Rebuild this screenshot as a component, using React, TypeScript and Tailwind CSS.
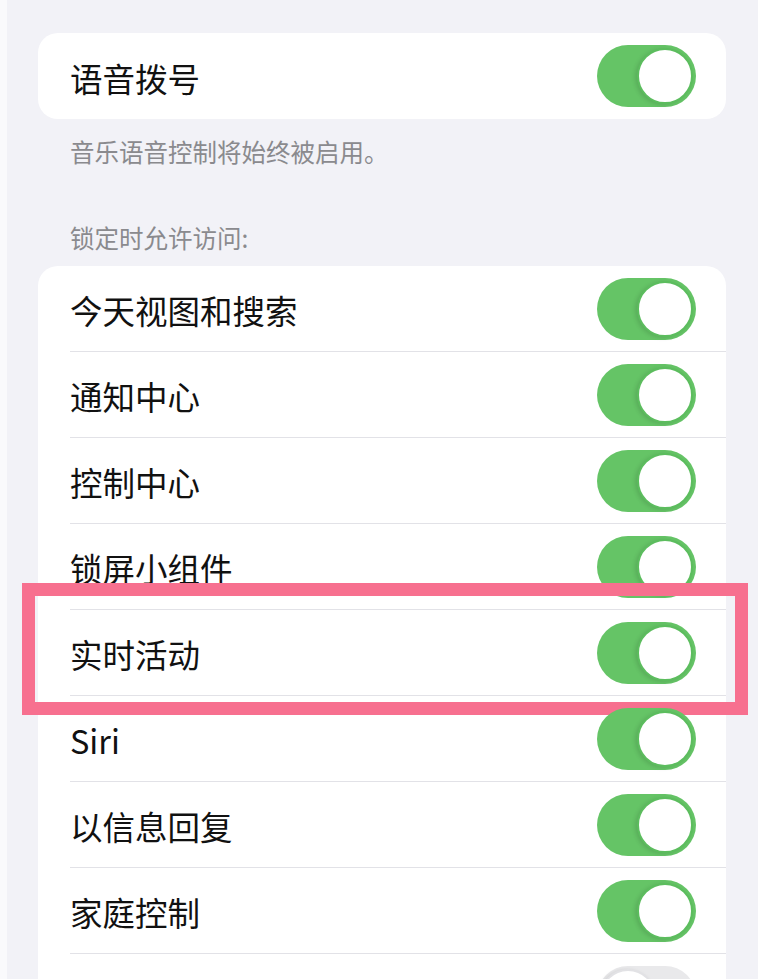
import React from 'react'

type Row = { label: string; on: boolean }

// the last row sits below the fold, only its switch peeks in
const lockRows: Row[] = [
  { label: '今天视图和搜索', on: true },
  { label: '通知中心', on: true },
  { label: '控制中心', on: true },
  { label: '锁屏小组件', on: true },
  { label: '实时活动', on: true },
  { label: 'Siri', on: true },
  { label: '以信息回复', on: true },
  { label: '家庭控制', on: true },
  { label: '', on: false },
]

function Toggle({ on }: { on: boolean }) {
  return (
    <div
      className={`flex h-[62px] w-[99px] shrink-0 items-center rounded-full p-[3px] ${
        on ? 'justify-end bg-[#65c466]' : 'justify-start bg-[#e9e9eb]'
      }`}
    >
      <div
        className={`h-[56px] w-[56px] rounded-full bg-white shadow-[-2px_1px_4px_rgba(0,0,0,0.12)] ${
          on ? 'border-2 border-[#5cbd5e]' : 'border-2 border-[#e2e2e5]'
        }`}
      />
    </div>
  )
}

function SettingRow({ row, last }: { row: Row; last?: boolean }) {
  return (
    <div className="pl-[32px]">
      <div className={`flex h-[86px] items-center justify-between pr-[30px] ${last ? '' : 'border-b border-[#e2e2e7]'}`}>
        <span className="pt-[4px] text-[32.5px] leading-none text-[#111111]">{row.label}</span>
        <Toggle on={row.on} />
      </div>
    </div>
  )
}

export default function App() {
  return (
    <div
      className="h-[979px] w-[758px] overflow-hidden border-l-[7px] border-[#fafafc] bg-[#f2f2f7]"
      style={{ fontFamily: '"Noto Sans CJK SC", "Noto Sans", sans-serif' }}
    >
      <div className="ml-[31px] mr-[32px] pt-[33px]">
        {/* voice dial */}
        <div className="rounded-[20px] bg-white">
          <SettingRow row={{ label: '语音拨号', on: true }} last />
        </div>
        <p className="mt-[19px] pl-[32px] text-[24.5px] leading-[28px] text-[#8a8a8e]">音乐语音控制将始终被启用。</p>

        <p className="mt-[58px] pl-[32px] text-[24.5px] leading-[28px] text-[#8a8a8e]">锁定时允许访问:</p>

        {/* allow access when locked */}
        <div className="relative mt-[14px] rounded-[20px] bg-white">
          {lockRows.map((row, i) => (
            <div key={i} className="relative">
              <SettingRow row={row} last={i === lockRows.length - 1} />
              {row.label === '实时活动' && (
                <div className="pointer-events-none absolute -left-[16px] -right-[22px] -top-[27px] -bottom-[19px] border-[13px] border-[#f7708f]" />
              )}
            </div>
          ))}
        </div>
      </div>
    </div>
  )
}
